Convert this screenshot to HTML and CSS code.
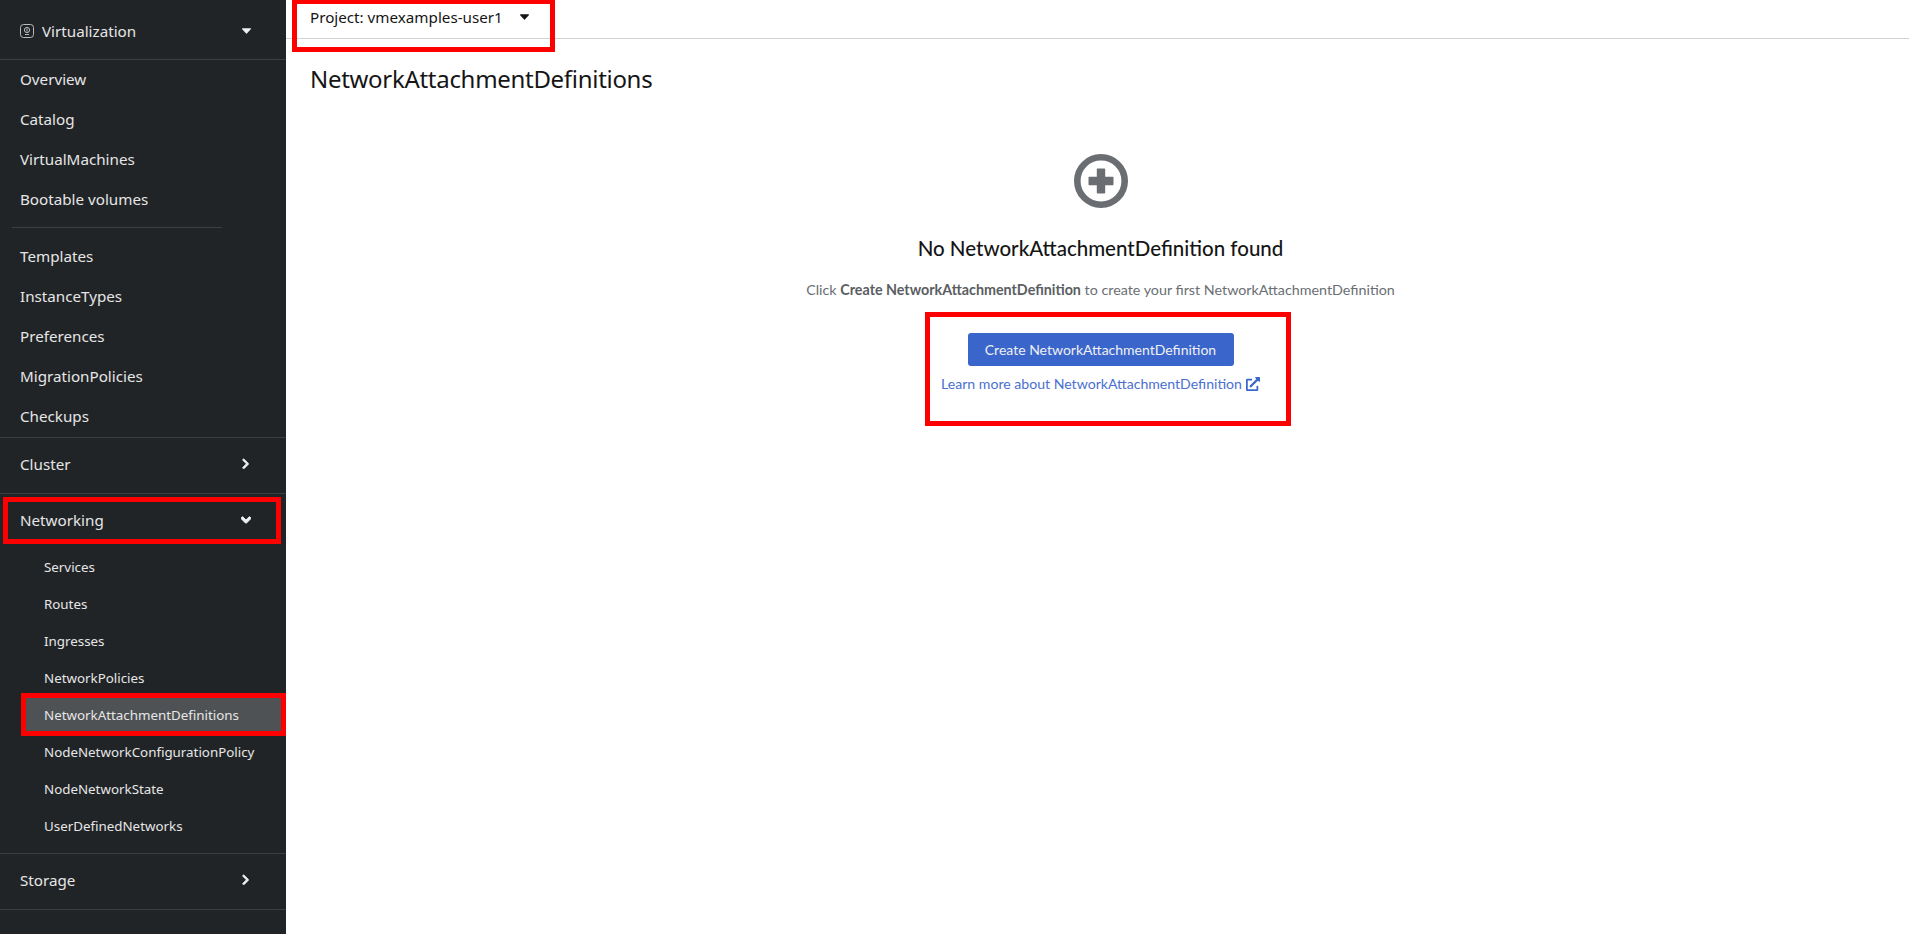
FILE: index.html
```html
<!DOCTYPE html>
<html lang="en">
<head>
  <meta charset="UTF-8">
  <meta name="viewport" content="width=device-width, initial-scale=1.0">
  <title>NetworkAttachmentDefinitions</title>
  <link rel="stylesheet" href="styles.css">
</head>
<body>
  <div class="page">
    <aside class="sidebar">
      <div class="perspective">
        <svg class="perspective-icon" viewBox="0 0 14 14" fill="none" stroke="#b8bbbe">
          <rect x="0.5" y="0.5" width="13" height="13" rx="3"/>
          <circle cx="7" cy="6" r="2.6"/>
          <path d="M5 10.5h4M7 4.5v3"/>
        </svg>
        <span class="perspective-name">Virtualization</span>
        <svg class="caret caret-light" viewBox="0 0 10 6"><path d="M0.6 0h8.8c.5 0 .8.6.4 1L5.4 5.7c-.2.3-.6.3-.8 0L.2 1C-.2.6.1 0 .6 0z"/></svg>
      </div>

      <nav class="group">
        <a class="item">Overview</a>
        <a class="item">Catalog</a>
        <a class="item">VirtualMachines</a>
        <a class="item">Bootable volumes</a>
        <div class="nav-sep"></div>
        <a class="item">Templates</a>
        <a class="item">InstanceTypes</a>
        <a class="item">Preferences</a>
        <a class="item">MigrationPolicies</a>
        <a class="item">Checkups</a>
      </nav>

      <div class="section section-closed">
        <span>Cluster</span>
        <svg class="chevron chevron-right" viewBox="0 0 320 512"><path d="M285.476 272.971L91.132 467.314c-9.373 9.373-24.569 9.373-33.941 0l-22.667-22.667c-9.357-9.357-9.375-24.522-.04-33.901L188.505 256 34.484 101.255c-9.335-9.379-9.317-24.544.04-33.901l22.667-22.667c9.373-9.373 24.569-9.373 33.941 0L285.475 239.03c9.373 9.372 9.373 24.568.001 33.941z"/></svg>
      </div>

      <div class="section-open">
        <div class="section">
          <span>Networking</span>
          <svg class="chevron chevron-down" viewBox="0 0 320 512"><path d="M143 352.3L7 216.3c-9.4-9.4-9.4-24.6 0-33.9l22.6-22.6c9.4-9.4 24.6-9.4 33.9 0l96.4 96.4 96.4-96.4c9.4-9.4 24.6-9.4 33.9 0l22.6 22.6c9.4 9.4 9.4 24.6 0 33.9l-136 136c-9.2 9.4-24.4 9.4-33.8 0z"/></svg>
          <div class="mark mark-networking"></div>
        </div>
        <div class="sub-list">
          <a class="sub-item">Services</a>
          <a class="sub-item">Routes</a>
          <a class="sub-item">Ingresses</a>
          <a class="sub-item">NetworkPolicies</a>
          <a class="sub-item active">NetworkAttachmentDefinitions<div class="mark mark-active"></div></a>
          <a class="sub-item">NodeNetworkConfigurationPolicy</a>
          <a class="sub-item">NodeNetworkState</a>
          <a class="sub-item">UserDefinedNetworks</a>
        </div>
      </div>

      <div class="section section-closed">
        <span>Storage</span>
        <svg class="chevron chevron-right" viewBox="0 0 320 512"><path d="M285.476 272.971L91.132 467.314c-9.373 9.373-24.569 9.373-33.941 0l-22.667-22.667c-9.357-9.357-9.375-24.522-.04-33.901L188.505 256 34.484 101.255c-9.335-9.379-9.317-24.544.04-33.901l22.667-22.667c9.373-9.373 24.569-9.373 33.941 0L285.475 239.03c9.373 9.372 9.373 24.568.001 33.941z"/></svg>
      </div>
    </aside>

    <main class="main">
      <div class="topbar">
        <span class="project">Project: vmexamples-user1</span>
        <svg class="caret" viewBox="0 0 10 6"><path d="M0.6 0h8.8c.5 0 .8.6.4 1L5.4 5.7c-.2.3-.6.3-.8 0L.2 1C-.2.6.1 0 .6 0z"/></svg>
        <div class="mark mark-project"></div>
      </div>

      <h1 class="title">NetworkAttachmentDefinitions</h1>

      <div class="empty">
        <svg class="empty-icon" viewBox="0 0 54 54">
          <circle cx="27" cy="27" r="23.7" fill="none" stroke="#6a6e73" stroke-width="6.6"/>
          <path d="M23.6 14.5h6.8a.8.8 0 0 1 .8.8v7.5h7.5a.8.8 0 0 1 .8.8v6.8a.8.8 0 0 1-.8.8h-7.5v7.5a.8.8 0 0 1-.8.8h-6.8a.8.8 0 0 1-.8-.8v-7.5h-7.5a.8.8 0 0 1-.8-.8v-6.8a.8.8 0 0 1 .8-.8h7.5v-7.5a.8.8 0 0 1 .8-.8z" fill="#6a6e73"/>
        </svg>
        <h2 class="empty-title">No NetworkAttachmentDefinition found</h2>
        <p class="empty-text">Click <b>Create NetworkAttachmentDefinition</b> to create your first NetworkAttachmentDefinition</p>
        <div class="actions">
          <button class="btn-primary">Create NetworkAttachmentDefinition</button>
          <a class="learn-link">Learn more about NetworkAttachmentDefinition
            <svg class="ext-icon" viewBox="0 0 512 512"><path d="M432,320H400a16,16,0,0,0-16,16V448H64V128H208a16,16,0,0,0,16-16V80a16,16,0,0,0-16-16H48A48,48,0,0,0,0,112V464a48,48,0,0,0,48,48H400a48,48,0,0,0,48-48V336A16,16,0,0,0,432,320ZM488,0h-128c-21.37,0-32.05,25.91-17,41l35.73,35.73L135,320.37a24,24,0,0,0,0,34L157.67,377a24,24,0,0,0,34,0L435.28,133.32,471,169c15,15,41,4.5,41-17V24A24,24,0,0,0,488,0Z"/></svg>
          </a>
          <div class="mark mark-actions"></div>
        </div>
      </div>
    </main>
  </div>
</body>
</html>
```

FILE: styles.css
```css
/* Page */
html, body {
  height: 100%;
  margin: 0;
}

body {
  font-family: "Noto Sans", Arial, sans-serif;
  background-color: #fff;
  color: #151515;
  overflow: hidden;
}

.page {
  display: flex;
  height: 100%;
}

/* Sidebar */
.sidebar {
  width: 286px;
  flex-shrink: 0;
  background-color: #212427;
  color: #e6e6e6;
  font-size: 15.2px;
}

.perspective {
  display: flex;
  align-items: center;
  height: 60px;
  padding: 3px 35px 0 20px;
  box-sizing: border-box;
  border-bottom: 1px solid #3c3f42;
}

.perspective-icon {
  width: 14px;
  height: 14px;
  margin-right: 8px;
}

.perspective-name {
  flex: 1;
}

.caret {
  width: 9px;
  height: 6px;
  fill: #151515;
}

.caret-light {
  fill: #f0f0f0;
}

.group {
  margin-top: -1px;
  border-bottom: 1px solid #3c3f42;
  padding-bottom: 1px;
}

.item {
  display: flex;
  align-items: center;
  height: 40px;
  padding-left: 20px;
}

.nav-sep {
  height: 1px;
  width: 210px;
  margin: 8px 0 8px 12px;
  background-color: #3c3f42;
}

.section {
  position: relative;
  display: flex;
  align-items: center;
  justify-content: space-between;
  height: 52px;
  padding: 0 32px 0 20px;
}

.section-closed {
  height: 51px;
  padding-bottom: 4px;
  border-bottom: 1px solid #3c3f42;
}

.section-open {
  height: 359px;
  border-bottom: 1px solid #3c3f42;
}

.chevron {
  fill: #f0f0f0;
  stroke: #f0f0f0;
  stroke-width: 30px;
}

.chevron-right {
  width: 7.3px;
  height: 11.7px;
  margin-right: 5px;
}

.chevron-down {
  width: 10px;
  height: 16px;
  margin-right: 3px;
}

.sub-list {
  padding-top: 2px;
}

.sub-item {
  position: relative;
  display: flex;
  align-items: center;
  height: 37px;
  margin-left: 24px;
  padding-left: 20px;
  font-size: 13.35px;
}

.sub-item.active {
  background-color: #4f5255;
}

/* Top bar */
.main {
  flex: 1;
  min-width: 0;
}

.topbar {
  position: relative;
  display: flex;
  align-items: center;
  height: 34px;
  padding-left: 24px;
  border-bottom: 1px solid #d2d2d2;
  padding-bottom: 4px;
  font-size: 15.2px;
}

.project {
  margin-right: 17px;
}

.title {
  margin: 22px 0 0 24px;
  font-size: 24px;
  font-weight: 400;
  line-height: 36px;
  letter-spacing: -0.3px;
}

/* Empty state */
.empty {
  display: flex;
  flex-direction: column;
  align-items: center;
  margin-top: 57px;
  padding-left: 6px;
}

.empty-icon {
  width: 54px;
  height: 54px;
}

.empty-title {
  margin: 25px 0 0;
  font-family: Lato, sans-serif;
  font-size: 20.5px;
  font-weight: 500;
  line-height: 30px;
}

.empty-text {
  margin: 16px 0 0;
  font-family: Lato, sans-serif;
  font-size: 14.3px;
  line-height: 21px;
  color: #6a6e73;
}

.empty-text b {
  color: #5a5e62;
}

.actions {
  position: relative;
  display: flex;
  flex-direction: column;
  align-items: center;
  margin-top: 33px;
  font-family: Lato, sans-serif;
}

.btn-primary {
  height: 33px;
  width: 266px;
  padding: 0;
  border: none;
  border-radius: 3px;
  background-color: #3a66cc;
  color: #f0f0f0;
  font-family: Lato, sans-serif;
  font-size: 14px;
}

.learn-link {
  display: flex;
  align-items: center;
  gap: 4px;
  margin-top: 7px;
  font-size: 14.1px;
  line-height: 21px;
  color: #4a70d0;
  white-space: nowrap;
}

.ext-icon {
  width: 14px;
  height: 14px;
  fill: #3a66cc;
}

/* Red annotation boxes drawn over the screenshot */
.mark {
  position: absolute;
  box-sizing: border-box;
  border: 5px solid #f00;
  pointer-events: none;
}

.mark-project {
  left: 6px;
  top: -1px;
  width: 263px;
  height: 53px;
}

.mark-networking {
  left: 3px;
  top: 3px;
  width: 278px;
  height: 47px;
}

.mark-active {
  left: -3px;
  top: -3px;
  width: 265px;
  height: 43px;
}

.mark-actions {
  left: -16px;
  top: -21px;
  width: 366px;
  height: 114px;
}
```
